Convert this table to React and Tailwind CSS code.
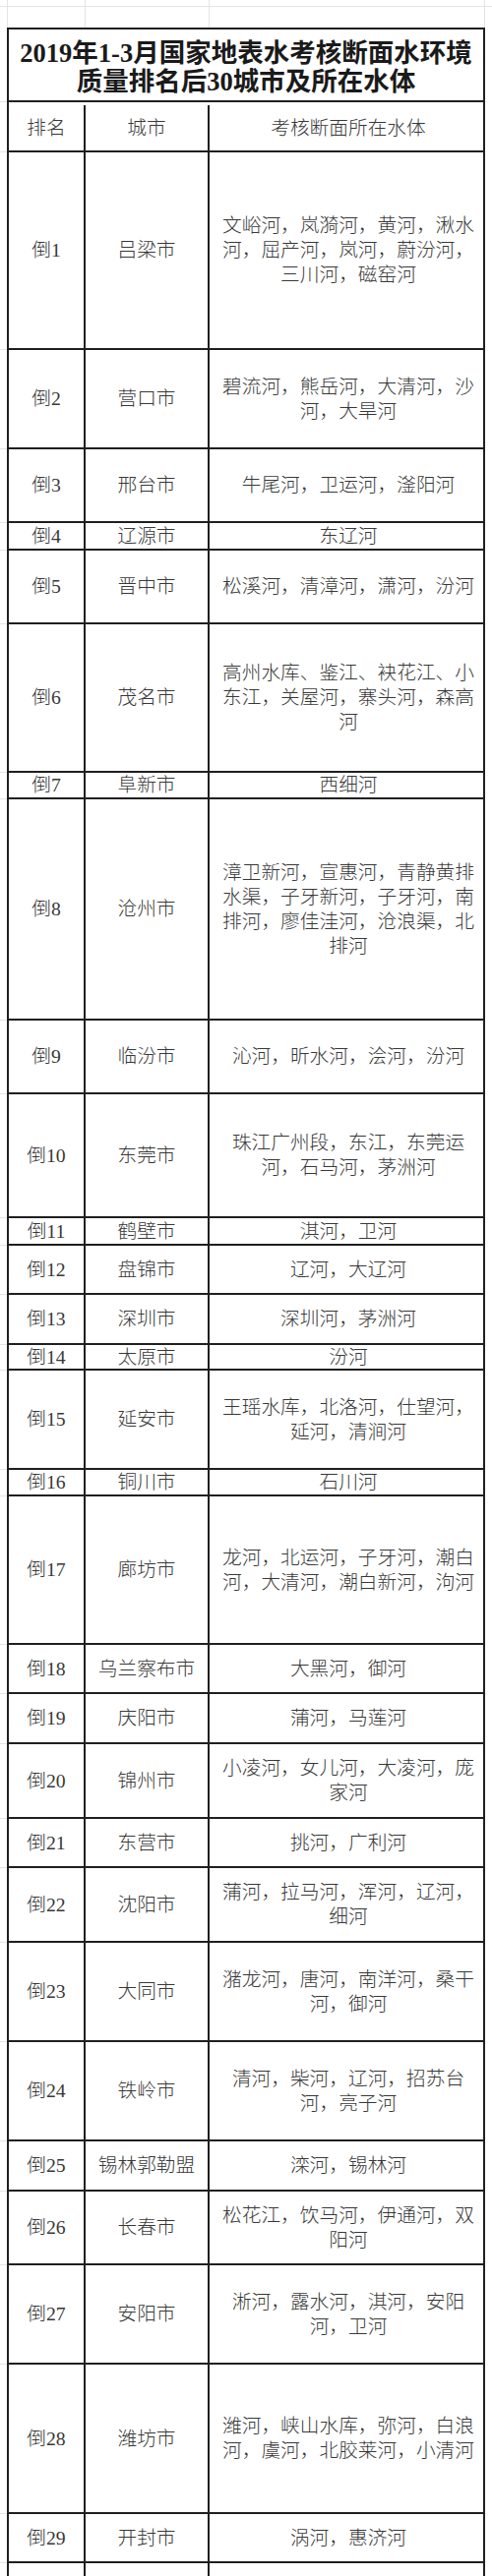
import React from "react";

const rows = [
  ["倒1", "吕梁市", "文峪河，岚漪河，黄河，湫水河，屈产河，岚河，蔚汾河，三川河，磁窑河", "h-[201px]"],
  ["倒2", "营口市", "碧流河，熊岳河，大清河，沙河，大旱河", "h-[101px]"],
  ["倒3", "邢台市", "牛尾河，卫运河，滏阳河", "h-[75px]"],
  ["倒4", "辽源市", "东辽河", "h-[28px]"],
  ["倒5", "晋中市", "松溪河，清漳河，潇河，汾河", "h-[75px]"],
  ["倒6", "茂名市", "高州水库、鉴江、袂花江、小东江，关屋河，寨头河，森高河", "h-[151px]"],
  ["倒7", "阜新市", "西细河", "h-[27px]"],
  ["倒8", "沧州市", "漳卫新河，宣惠河，青静黄排水渠，子牙新河，子牙河，南排河，廖佳洼河，沧浪渠，北排河", "h-[225px]"],
  ["倒9", "临汾市", "沁河，昕水河，浍河，汾河", "h-[75px]"],
  ["倒10", "东莞市", "珠江广州段，东江，东莞运河，石马河，茅洲河", "h-[126px]"],
  ["倒11", "鹤壁市", "淇河，卫河", "h-[28px]"],
  ["倒12", "盘锦市", "辽河，大辽河", "h-[50px]"],
  ["倒13", "深圳市", "深圳河，茅洲河", "h-[51px]"],
  ["倒14", "太原市", "汾河", "h-[26px]"],
  ["倒15", "延安市", "王瑶水库，北洛河，仕望河，延河，清涧河", "h-[101px]"],
  ["倒16", "铜川市", "石川河", "h-[27px]"],
  ["倒17", "廊坊市", "龙河，北运河，子牙河，潮白河，大清河，潮白新河，泃河", "h-[151px]"],
  ["倒18", "乌兰察布市", "大黑河，御河", "h-[50px]"],
  ["倒19", "庆阳市", "蒲河，马莲河", "h-[51px]"],
  ["倒20", "锦州市", "小凌河，女儿河，大凌河，庞家河", "h-[76px]"],
  ["倒21", "东营市", "挑河，广利河", "h-[50px]"],
  ["倒22", "沈阳市", "蒲河，拉马河，浑河，辽河，细河", "h-[76px]"],
  ["倒23", "大同市", "潴龙河，唐河，南洋河，桑干河，御河", "h-[101px]"],
  ["倒24", "铁岭市", "清河，柴河，辽河，招苏台河，亮子河", "h-[101px]"],
  ["倒25", "锡林郭勒盟", "滦河，锡林河", "h-[51px]"],
  ["倒26", "长春市", "松花江，饮马河，伊通河，双阳河", "h-[75px]"],
  ["倒27", "安阳市", "淅河，露水河，淇河，安阳河，卫河", "h-[101px]"],
  ["倒28", "潍坊市", "潍河，峡山水库，弥河，白浪河，虞河，北胶莱河，小清河", "h-[152px]"],
  ["倒29", "开封市", "涡河，惠济河", "h-[50px]"],
  ["倒30", "菏泽市", "东鱼河，洙赵新河，万福河", "h-[76px]"],
];

function Row({ rank, city, water, h }) {
  return (
    <div className="flex">
      <div className="w-[7px] border-b border-[#e4e4e4]" />
      <div className={`flex w-[486px] border-x-2 border-b-2 border-[#1f1f1f] ${h}`}>
        <div className="flex w-[78px] items-center justify-center border-r-2 border-[#1f1f1f]">
          {rank}
        </div>
        <div className="flex w-[126px] items-center justify-center border-r-2 border-[#1f1f1f]">
          {city}
        </div>
        <div className="flex flex-1 items-center pl-[12px] pr-[8px]">
          <span className="block w-full text-center">{water}</span>
        </div>
      </div>
    </div>
  );
}

export default function App() {
  return (
    <div className="w-[500px] bg-white font-['Liberation_Serif','Noto_Sans_CJK_SC',serif] text-[19.7px] font-light leading-[25px] text-[#383838]">
      {/* faint spreadsheet grid strip */}
      <div className="flex h-[28px]">
        <div className="w-[7px]">
          <div className="h-[7px] border-b border-[#e4e4e4]" />
        </div>
        <div className="w-[79px] border-l border-[#e4e4e4]">
          <div className="h-[7px] border-b border-[#e4e4e4]" />
        </div>
        <div className="w-[126px] border-l border-[#e4e4e4]">
          <div className="h-[7px] border-b border-[#e4e4e4]" />
        </div>
        <div className="w-[281px] border-x border-[#e4e4e4]">
          <div className="h-[7px] border-b border-[#e4e4e4]" />
        </div>
        <div className="flex-1">
          <div className="h-[7px] border-b border-[#e4e4e4]" />
        </div>
      </div>

      {/* title */}
      <div className="flex">
        <div className="w-[7px] border-b border-[#e4e4e4]" />
        <div className="flex h-[76px] w-[486px] items-center justify-center border-2 border-[#1f1f1f] pt-[5px]">
          <span className="block w-full text-center text-[26.5px] font-bold leading-[29px] text-[#1a1a1a]">
            2019年1-3月国家地表水考核断面水环境质量排名后30城市及所在水体
          </span>
        </div>
      </div>

      {/* header */}
      <div className="flex">
        <div className="w-[7px] border-b border-[#e4e4e4]" />
        <div className="flex h-[51px] w-[486px] border-x-2 border-b-2 border-[#1f1f1f] pt-[3px]">
          <div className="flex w-[78px] items-center justify-center border-r-2 border-[#1f1f1f]">排名</div>
          <div className="flex w-[126px] items-center justify-center border-r-2 border-[#1f1f1f]">城市</div>
          <div className="flex flex-1 items-center justify-center pl-[4px]">考核断面所在水体</div>
        </div>
      </div>

      {rows.map(([rank, city, water, h]) => (
        <Row key={rank} rank={rank} city={city} water={water} h={h} />
      ))}
    </div>
  );
}
